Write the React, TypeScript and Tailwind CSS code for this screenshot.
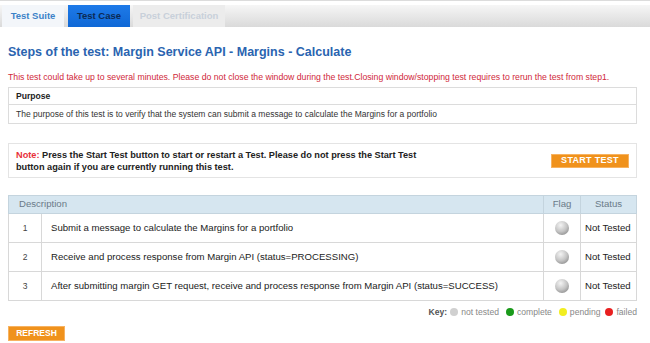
import React from 'react'

const steps = [
  { n: 1, text: 'Submit a message to calculate the Margins for a portfolio' },
  { n: 2, text: 'Receive and process response from Margin API (status=PROCESSING)' },
  { n: 3, text: 'After submitting margin GET request, receive and process response from Margin API (status=SUCCESS)' },
]

const Ball = ({ color }: { color: string }) => (
  <span
    className="inline-block rounded-full"
    style={{ width: 14, height: 14, background: `radial-gradient(circle at 40% 30%, #f4f4f4 0%, ${color} 50%, #5e5e5e 115%)` }}
  />
)

const Dot = ({ color }: { color: string }) => (
  <span className="inline-block w-[8px] h-[8px] rounded-full mr-[3px]" style={{ background: color }} />
)

export default function App() {
  return (
    <div className="w-[650px] h-[343px] bg-white overflow-hidden font-['Liberation_Sans',Arial,sans-serif]">
      {/* Tabs */}
      <div className="h-[1px] bg-[#dcdcdc]" />
      <div className="mt-[4px] h-[22px] flex items-end bg-gradient-to-b from-[#f6f6f6] to-[#dadada] pl-[2px]">
        <div className="w-[62px] h-[22px] flex items-center justify-center bg-[#f3f6fa] text-[9.5px] font-bold text-[#3b82c8]">
          Test Suite
        </div>
        <div className="ml-[4px] w-[62px] h-[22px] flex items-center justify-center bg-gradient-to-b from-[#1e7ae8] to-[#0f68d6] text-[9.5px] font-bold text-[#0b2a55]">
          Test Case
        </div>
        <div className="ml-[3px] w-[92px] h-[22px] flex items-center justify-center bg-[#ececec] text-[9.5px] font-bold text-[#c8d0da]">
          Post Certification
        </div>
      </div>

      <div className="px-[8px]">
        <h1 className="mt-[17px] text-[12.5px] leading-[16px] font-bold text-[#2a64b0]">
          Steps of the test: Margin Service API - Margins - Calculate
        </h1>
        <p className="mt-[12px] text-[8.7px] leading-[11px] text-[#d0283a] whitespace-nowrap">
          This test could take up to several minutes. Please do not close the window during the test.Closing window/stopping test requires to rerun the test from step1.
        </p>

        {/* Purpose */}
        <div className="mt-[4px] w-[629px] border border-[#dcdcdc]">
          <div className="h-[17px] flex items-center px-[7px] text-[8.6px] font-bold text-[#222] border-b border-[#dcdcdc]">Purpose</div>
          <div className="h-[18px] flex items-center px-[7px] text-[8.5px] text-[#333] whitespace-nowrap">
            The purpose of this test is to verify that the system can submit a message to calculate the Margins for a portfolio
          </div>
        </div>

        {/* Note */}
        <div className="mt-[19px] w-[629px] h-[35px] border border-[#e4e4e4] flex items-center justify-between pl-[7px] pr-[7px]">
          <p className="w-[412px] text-[9.2px] leading-[12px] font-bold text-[#222]">
            <span className="text-[#e8303a]">Note: </span>Press the Start Test button to start or restart a Test. Please do not press the Start Test button again if you are currently running this test.
          </p>
          <button className="w-[78px] h-[14px] bg-[#f0921c] text-white text-[9px] font-bold tracking-[0.3px] border border-[#f7b260] leading-none">
            START TEST
          </button>
        </div>

        {/* Steps table */}
        <table className="mt-[17px] w-[629px] border-collapse border border-[#d8d8d8] text-[9.6px] text-[#222]">
          <thead>
            <tr className="h-[18px] bg-[#d6e6f0] text-[#6a7a88]">
              <th colSpan={2} className="text-left font-normal pl-[10px] border border-[#c4d4de]">Description</th>
              <th className="w-[37px] font-normal border border-[#c4d4de]">Flag</th>
              <th className="w-[56px] font-normal border border-[#c4d4de]">Status</th>
            </tr>
          </thead>
          <tbody>
            {steps.map((s) => (
              <tr key={s.n} className="h-[29px]">
                <td className="w-[33px] text-center text-[#444] border border-[#d8d8d8] text-[8.5px]">{s.n}</td>
                <td className="pl-[9px] border border-[#d8d8d8] whitespace-nowrap">{s.text}</td>
                <td className="text-center border border-[#d8d8d8]">
                  <span className="inline-flex align-middle"><Ball color="#c4c4c4" /></span>
                </td>
                <td className="pl-[4px] border border-[#d8d8d8] whitespace-nowrap">Not Tested</td>
              </tr>
            ))}
          </tbody>
        </table>

        {/* Key */}
        <div className="mt-[5px] w-[629px] flex justify-end items-center text-[8.6px] text-[#888]">
          <span className="font-bold text-[#555] mr-[3px]">Key:</span>
          <Dot color="#d0d0d0" /><span className="mr-[7px]">not tested</span>
          <Dot color="#1a9a1a" /><span className="mr-[7px]">complete</span>
          <Dot color="#f2ee20" /><span className="mr-[5px]">pending</span>
          <Dot color="#e82020" /><span>failed</span>
        </div>

        <button className="mt-[3px] w-[57px] h-[15px] bg-[#f0921c] text-white text-[8.5px] font-bold border border-[#f7b260] leading-none">
          REFRESH
        </button>
      </div>
    </div>
  )
}
